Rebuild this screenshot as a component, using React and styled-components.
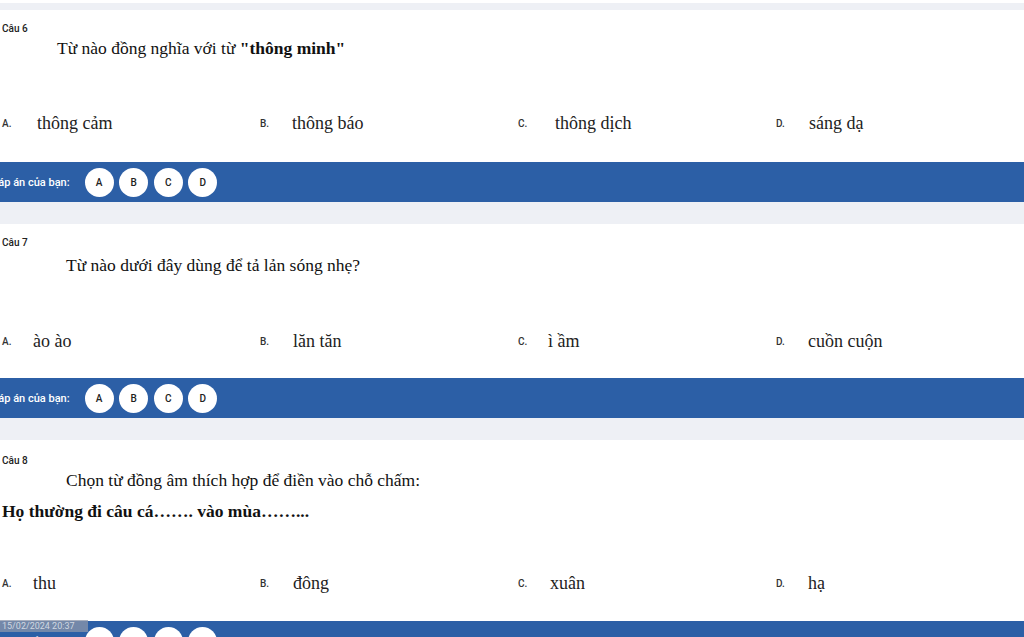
import styled, { createGlobalStyle } from 'styled-components'

const GlobalStyle = createGlobalStyle`
  html, body {
    margin: 0;
    padding: 0;
    background: #ffffff;
    overflow: hidden;
  }
  body {
    font-family: Roboto, "Liberation Sans", Arial, sans-serif;
  }
`

const questions = [
  {
    id: 6,
    indent: 57,
    labelTop: 12,
    qTop: 0,
    lines: [
      <>Từ nào đồng nghĩa với từ <b>"thông minh"</b></>,
    ],
    gap: 51,
    options: ['thông cảm', 'thông báo', 'thông dịch', 'sáng dạ'],
    textOffsets: [35, 32, 37, 33],
    barGap: 27,
  },
  {
    id: 7,
    indent: 66,
    labelTop: 12,
    qTop: 3,
    lines: ['Từ nào dưới đây dùng để tả lản sóng nhẹ?'],
    gap: 52,
    options: ['ào ào', 'lăn tăn', 'ì ầm', 'cuồn cuộn'],
    textOffsets: [31, 33, 30, 32],
    barGap: 25,
  },
  {
    id: 8,
    indent: 66,
    labelTop: 14,
    qTop: 0,
    lines: [
      'Chọn từ đồng âm thích hợp để điền vào chỗ chấm:',
      <b>Họ thường đi câu cá……. vào mùa……...</b>,
    ],
    gap: 48,
    options: ['thu', 'đông', 'xuân', 'hạ'],
    textOffsets: [31, 33, 32, 32],
    barGap: 26,
  },
]

const letters = ['A', 'B', 'C', 'D']

export default function App() {
  return (
    <>
      <GlobalStyle />
      <Page>
        {questions.map((q) => (
          <Card key={q.id}>
            <Body $top={q.labelTop}>
              <Label>Câu {q.id}</Label>
              <Question $top={q.qTop}>
                {q.lines.map((line, i) => (
                  <Line key={i} $indent={i === 0 ? q.indent : 3}>
                    {line}
                  </Line>
                ))}
              </Question>
              <Options $gap={q.gap} $after={q.barGap}>
                {q.options.map((opt, i) => (
                  <Option key={opt}>
                    <OptLetter $w={q.textOffsets[i]}>{letters[i]}.</OptLetter>
                    <OptText>{opt}</OptText>
                  </Option>
                ))}
              </Options>
            </Body>
            <AnswerBar>
              <BarLabel>Đáp án của bạn:</BarLabel>
              <Choices>
                {letters.map((l) => (
                  <Choice key={l}>{l}</Choice>
                ))}
              </Choices>
            </AnswerBar>
          </Card>
        ))}
        <Stamp>15/02/2024 20:37</Stamp>
      </Page>
    </>
  )
}

const Page = styled.div`
  position: relative;
  margin-top: 3px;
  padding-top: 7px;
  background: #eef0f5;
  display: flex;
  flex-direction: column;
  gap: 22px;
  height: 627px;
  overflow: hidden;
`

const Card = styled.section`
  background: #ffffff;
  display: flex;
  flex-direction: column;
`

const Body = styled.div`
  padding: ${({ $top }) => $top}px 0 0 2px;
  display: flex;
  flex-direction: column;
`

const Label = styled.div`
  font-size: 10px;
  line-height: 14px;
  font-weight: 500;
  color: #222;
`

const Question = styled.div`
  margin-top: ${({ $top }) => $top}px;
  font-family: "Liberation Serif", "Times New Roman", serif;
  font-size: 17.5px;
  color: #111;
  display: flex;
  flex-direction: column;
  gap: 7px;
`

const Line = styled.div`
  line-height: 24px;
  padding-left: ${({ $indent }) => $indent - 2}px;
  margin-left: ${({ $indent }) => ($indent < 10 ? -1 : 0)}px;

  b {
    font-weight: 700;
  }
`

const Options = styled.div`
  margin-top: ${({ $gap }) => $gap}px;
  margin-bottom: ${({ $after }) => $after}px;
  display: grid;
  grid-template-columns: repeat(4, 258px);
`

const Option = styled.div`
  display: flex;
  align-items: center;
  height: 24px;
`

const OptLetter = styled.span`
  width: ${({ $w }) => $w}px;
  flex-shrink: 0;
  font-size: 10px;
  font-weight: 500;
  color: #333;
`

const OptText = styled.span`
  font-family: "Liberation Serif", "Times New Roman", serif;
  font-size: 18px;
  color: #222;
`

const AnswerBar = styled.div`
  height: 40px;
  background: #2c5fa6;
  display: flex;
  align-items: center;
  gap: 15px;
`

const BarLabel = styled.span`
  margin-left: -9px;
  color: #ffffff;
  font-size: 11px;
  font-weight: 500;
`

const Choices = styled.div`
  display: flex;
  gap: 5.5px;
`

const Choice = styled.div`
  width: 29px;
  height: 29px;
  border-radius: 50%;
  background: #ffffff;
  display: flex;
  align-items: center;
  justify-content: center;
  font-size: 10px;
  font-weight: 500;
  color: #222;
`

const Stamp = styled.div`
  position: absolute;
  left: 0;
  top: 617px;
  width: 88px;
  height: 12px;
  background: rgba(140, 150, 170, 0.75);
  color: rgba(220, 224, 232, 0.9);
  font-size: 9px;
  line-height: 12px;
  padding-left: 2px;
  box-sizing: border-box;
  overflow: hidden;
  white-space: nowrap;
`
